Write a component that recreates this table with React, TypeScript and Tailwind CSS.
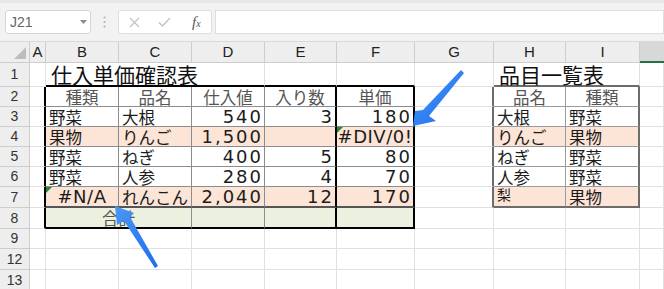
import React from 'react';

type Kind = 'jp' | 'num' | 'err' | 'head' | 'small' | 'title' | 'none';

// one sheet cell; borders are drawn on the right/bottom edge of each cell
type Cell = { cls: string; v?: string; kind?: Kind; span?: 2 | 3; flag?: boolean };

const gridCls = 'border-r border-b border-[#e0e0e0] bg-white';
const hdrCls = 'border-r border-b border-[#cdcdcd] bg-[#eeeeee]';

const jpFont = "font-['Noto_Sans_CJK_JP',sans-serif]";
const numFont = "font-['DejaVu_Sans','Noto_Sans_CJK_JP',sans-serif]";

function Content({ kind, v }: { kind: Kind; v: string }) {
  switch (kind) {
    case 'num':
      return (
        <span className={`ml-auto pr-[1px] text-[18px] leading-[18px] tracking-[2px] text-[#1c1c1c] ${numFont}`}>{v}</span>
      );
    case 'err':
      return (
        <span className={`mx-auto text-[18px] leading-[18px] tracking-[0.5px] text-[#1c1c1c] whitespace-nowrap ${numFont}`}>
          {v}
        </span>
      );
    case 'head':
      return <span className={`mx-auto text-[16.5px] leading-[18px] text-[#555] ${jpFont}`}>{v}</span>;
    case 'jp':
      return (
        <span className={`pl-[3px] text-[16.5px] leading-[18px] text-[#1c1c1c] whitespace-nowrap ${jpFont}`}>{v}</span>
      );
    case 'small':
      return <span className={`pl-[3px] mb-auto text-[14px] leading-[15px] text-[#1c1c1c] ${jpFont}`}>{v}</span>;
    case 'title':
      return (
        <span className={`pl-[5px] mt-auto text-[21px] leading-[22px] text-[#111] whitespace-nowrap ${jpFont}`}>
          {v}
        </span>
      );
    default:
      return null;
  }
}

function SheetCell({ cell }: { cell: Cell }) {
  const span = cell.span === 3 ? 'col-span-3' : cell.span === 2 ? 'col-span-2' : '';
  return (
    <div className={`relative flex items-center min-w-0 ${span} ${cell.cls}`}>
      {cell.flag && (
        <svg className="absolute left-0 top-0" width="6" height="6" viewBox="0 0 6 6">
          <polygon points="0,0 6,0 0,6" fill="#1f8a3b" />
        </svg>
      )}
      {cell.v !== undefined && <Content kind={cell.kind ?? 'jp'} v={cell.v} />}
    </div>
  );
}

function RowHead({ n }: { n: string }) {
  return (
    <div className={`${hdrCls} flex items-center justify-center text-[14px] text-[#333] font-['Liberation_Sans',Arial,sans-serif]`}>
      {n}
    </div>
  );
}

// 仕入単価確認表 B:F and 品目一覧表 H:I, rows 2-7
const priceRows: [string, Kind][][] = [
  [['種類', 'head'], ['品名', 'head'], ['仕入値', 'head'], ['入り数', 'head'], ['単価', 'head']],
  [['野菜', 'jp'], ['大根', 'jp'], ['540', 'num'], ['3', 'num'], ['180', 'num']],
  [['果物', 'jp'], ['りんご', 'jp'], ['1,500', 'num'], ['', 'none'], ['#DIV/0!', 'err']],
  [['野菜', 'jp'], ['ねぎ', 'jp'], ['400', 'num'], ['5', 'num'], ['80', 'num']],
  [['野菜', 'jp'], ['人参', 'jp'], ['280', 'num'], ['4', 'num'], ['70', 'num']],
  [['#N/A', 'err'], ['れんこん', 'jp'], ['2,040', 'num'], ['12', 'num'], ['170', 'num']],
];

const itemRows: [string, string][] = [
  ['品名', '種類'],
  ['大根', '野菜'],
  ['りんご', '果物'],
  ['ねぎ', '野菜'],
  ['人参', '野菜'],
  ['梨', '果物'],
];

function bodyRow(i: number): Cell[] {
  const peach = i === 2 || i === 5;
  const last = i === 5;
  const fill = peach ? 'bg-[#fce4d6]' : 'bg-white';
  const cells: Cell[] = [];
  cells.push({ cls: 'border-r-2 border-r-black border-b border-b-[#e0e0e0] bg-white' });
  priceRows[i].forEach(([v, kind], c) => {
    const right = c >= 3 ? 'border-r-2 border-r-black' : 'border-r border-r-[#8c8c8c]';
    const bottom = last ? 'border-b-2 border-b-[#555]' : 'border-b border-b-[#8c8c8c]';
    cells.push({
      cls: `${right} ${bottom} ${fill}`,
      v: kind === 'none' ? undefined : v,
      kind,
      flag: kind === 'err',
    });
  });
  cells.push({ cls: 'border-r-2 border-r-[#6c6c6c] border-b border-b-[#e0e0e0] bg-white' });
  itemRows[i].forEach((v, c) => {
    const right = c === 1 ? 'border-r-2 border-r-[#6c6c6c]' : 'border-r border-r-[#9a9a9a]';
    const bottom = last ? 'border-b-2 border-b-[#6c6c6c]' : 'border-b border-b-[#9a9a9a]';
    const kind: Kind = i === 0 ? 'head' : last && c === 0 ? 'small' : 'jp';
    cells.push({ cls: `${right} ${bottom} ${fill}`, v, kind });
  });
  cells.push({ cls: gridCls });
  return cells;
}

const titleRow: Cell[] = [
  { cls: gridCls },
  { cls: 'border-r border-r-[#e0e0e0] border-b-2 border-b-black bg-white', v: '仕入単価確認表', kind: 'title', span: 3 },
  { cls: 'border-r border-r-[#e0e0e0] border-b-2 border-b-black bg-white' },
  { cls: 'border-r border-r-[#e0e0e0] border-b-2 border-b-black bg-white' },
  { cls: gridCls },
  { cls: 'border-r border-r-[#e0e0e0] border-b-2 border-b-[#6c6c6c] bg-white', v: '品目一覧表', kind: 'title', span: 2 },
  { cls: gridCls },
];

const totalRow: Cell[] = [
  { cls: 'border-r-2 border-r-black border-b border-b-[#e0e0e0] bg-white' },
  { cls: 'border-r border-r-[#8c8c8c] border-b-2 border-b-black bg-[#ebf1de]', v: '合計', kind: 'head', span: 2 },
  { cls: 'border-r border-r-[#8c8c8c] border-b-2 border-b-black bg-[#ebf1de]' },
  { cls: 'border-r-2 border-r-black border-b-2 border-b-black bg-[#ebf1de]' },
  { cls: 'border-r-2 border-r-black border-b-2 border-b-black bg-[#ebf1de]' },
  { cls: gridCls },
  { cls: gridCls },
  { cls: gridCls },
  { cls: gridCls },
];

function Toolbar() {
  return (
    <div className="h-[42px] shrink-0 bg-[#f2f2f2] border-t-[3px] border-t-[#e7e7e7] border-b border-b-[#d9d9d9] flex items-start pt-[7px] pl-[5px]">
      <div className="w-[86px] h-[24px] bg-white border border-[#d6d6d6] rounded-[3px] flex items-center justify-between pl-[4px] pr-[3px]">
        <span className="text-[14px] text-[#666] font-['Liberation_Sans',Arial,sans-serif]">J21</span>
        <svg width="7" height="5" viewBox="0 0 7 5">
          <polygon points="0,0 7,0 3.5,4" fill="#8a8a8a" />
        </svg>
      </div>
      <div className="w-[27px] h-[24px] flex items-center justify-center">
        <svg width="3" height="12" viewBox="0 0 3 12">
          <circle cx="1.5" cy="1.5" r="1.1" fill="#b4b4b4" />
          <circle cx="1.5" cy="6" r="1.1" fill="#b4b4b4" />
          <circle cx="1.5" cy="10.5" r="1.1" fill="#b4b4b4" />
        </svg>
      </div>
      <div className="w-[94px] h-[24px] bg-white border border-[#dedede] rounded-[3px] flex items-center">
        <svg className="ml-[10px]" width="11" height="11" viewBox="0 0 11 11">
          <path d="M1 1L10 10M10 1L1 10" stroke="#c2c2c2" strokeWidth="1.3" />
        </svg>
        <svg className="ml-[18px]" width="13" height="10" viewBox="0 0 13 10">
          <path d="M1 5.5L4.5 9L12 1" stroke="#c2c2c2" strokeWidth="1.3" fill="none" />
        </svg>
        <span className="ml-[21px] italic text-[15px] text-[#555] font-['Liberation_Serif',serif]">
          f<span className="text-[10px]">x</span>
        </span>
      </div>
      <div className="ml-[3px] flex-1 h-[24px] bg-white border border-[#dedede]" />
    </div>
  );
}

function Arrows() {
  return (
    <svg className="absolute left-0 top-0 pointer-events-none" width="664" height="289" viewBox="0 0 664 289">
      <defs>
        <linearGradient id="arrowBlue" x1="0" y1="0" x2="1" y2="1">
          <stop offset="0" stopColor="#4b97f7" />
          <stop offset="1" stopColor="#1a6df0" />
        </linearGradient>
      </defs>
      <polygon points="461,70 464,73 429,116 436,121 413,126 415,111 423,110" fill="url(#arrowBlue)" />
      <polygon points="155,268 158,266 130,217 134,213 115,206 117,225 124,221" fill="url(#arrowBlue)" />
    </svg>
  );
}

const letters = ['A', 'B', 'C', 'D', 'E', 'F', 'G', 'H', 'I'];

export default function App() {
  const blanks = (n: number) => Array.from({ length: n }, (_, i) => <div key={`g${i}`} className={gridCls} />);

  return (
    <div className="relative w-[664px] h-[289px] overflow-hidden bg-white flex flex-col">
      <Toolbar />
      <div className="grid grid-cols-[30px_16px_73px_73px_73px_72px_78px_79px_72px_74px_24px] grid-rows-[21px_24px_20px_20px_20px_20px_20px_21px_21px_20px_21px_22px]">
        {/* column headings */}
        <div className={`${hdrCls} flex items-end justify-end pr-[3px] pb-[3px]`}>
          <svg width="12" height="12" viewBox="0 0 12 12">
            <polygon points="12,0 12,12 0,12" fill="#bdbdbd" />
          </svg>
        </div>
        {letters.map((l) => (
          <div
            key={l}
            className={`${hdrCls} flex items-center justify-center text-[15px] text-[#222] font-['Liberation_Sans',Arial,sans-serif]`}
          >
            {l}
          </div>
        ))}
        <div className="border-b-2 border-b-[#217346] bg-[#d8d8d8]" />

        <RowHead n="1" />
        {titleRow.map((c, i) => (
          <SheetCell key={`t${i}`} cell={c} />
        ))}

        {priceRows.map((_, i) => (
          <React.Fragment key={`r${i}`}>
            <RowHead n={String(i + 2)} />
            {bodyRow(i).map((c, j) => (
              <SheetCell key={j} cell={c} />
            ))}
          </React.Fragment>
        ))}

        <RowHead n="8" />
        {totalRow.map((c, i) => (
          <SheetCell key={`s${i}`} cell={c} />
        ))}

        {['9', '12', '13'].map((n) => (
          <React.Fragment key={n}>
            <RowHead n={n} />
            {blanks(10)}
          </React.Fragment>
        ))}
      </div>
      <Arrows />
    </div>
  );
}
